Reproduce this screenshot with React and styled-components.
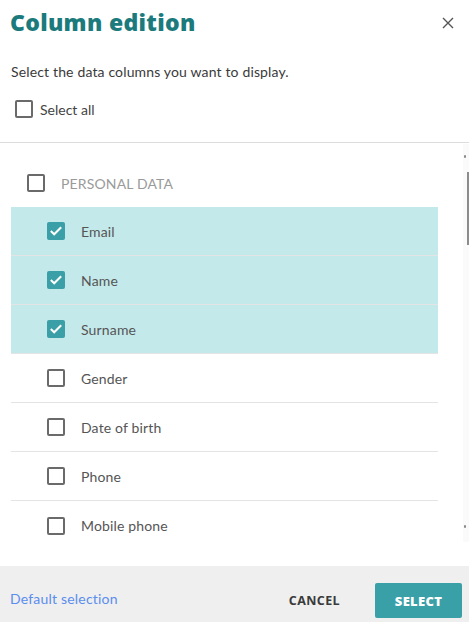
import React, { useState } from "react";
import styled, { createGlobalStyle } from "styled-components";

const Global = createGlobalStyle`
  html, body { margin: 0; padding: 0; background: #fff; overflow: hidden; }
  body { font-family: Lato, "Noto Sans", sans-serif; }
  * { box-sizing: border-box; }
`;

const Dialog = styled.div`
  width: 469px;
  height: 622px;
  display: flex;
  flex-direction: column;
  background: #fff;
`;

const Header = styled.div`
  display: flex;
  align-items: flex-start;
  justify-content: space-between;
  padding: 7px 14px 0 10px;
`;

const Title = styled.h1`
  margin: 0;
  font-family: "Open Sans", sans-serif;
  font-weight: 800;
  font-size: 23px;
  line-height: 30px;
  color: #1b7a7c;
  letter-spacing: 0.3px;
`;

const CloseButton = styled.button`
  border: 0;
  background: none;
  padding: 0;
  margin-top: 9px;
  width: 14px;
  height: 14px;
  display: flex;
  cursor: pointer;
`;

const Intro = styled.div`
  padding: 0 11px;
`;

const Subtitle = styled.p`
  margin: 26px 0 0;
  font-size: 14px;
  line-height: 18px;
  letter-spacing: 0.15px;
  color: #3a3a3a;
`;

const SelectAllRow = styled.label`
  display: flex;
  align-items: center;
  gap: 7px;
  margin: 19px 0 0 4px;
  height: 18px;
  font-size: 14px;
  color: #444;
`;

const Divider = styled.div`
  height: 1px;
  background: #dcdcdc;
  margin-top: 24px;
`;

const ScrollArea = styled.div`
  flex: 0 0 423px;
  display: flex;
  overflow: hidden;
`;

const List = styled.div`
  flex: 1;
  padding: 0 25px 0 11px;
  overflow: hidden;
`;

const Track = styled.div`
  flex: 0 0 6px;
  margin: 1px 0 24px;
  background: #fafafa;
  display: flex;
  flex-direction: column;
  align-items: flex-end;
  padding: 11px 0 14px;
`;

const Arrow = styled.span`
  width: 2px;
  height: 3px;
  margin-right: 3px;
  background: #8a8a8a;
  border-radius: 1px;
`;

const Thumb = styled.span`
  width: 2px;
  height: 73px;
  margin-top: 14px;
  background: #8c8c8c;
`;

const TrackFill = styled.span`
  flex: 1;
`;

const GroupHeader = styled.label`
  display: flex;
  align-items: center;
  gap: 16px;
  height: 64px;
  padding: 16px 0 0 16px;
  font-size: 14px;
  letter-spacing: 0.15px;
  color: #9a9a9a;
  text-transform: uppercase;
`;

const Row = styled.label`
  display: flex;
  align-items: center;
  gap: 16px;
  height: 49px;
  padding-left: 36px;
  border-bottom: 1px solid #e4e4e4;
  background: ${(p) => (p.$checked ? "#c4e9eb" : "#fff")};
  font-size: 14px;
  letter-spacing: 0.15px;
  color: #555;
  &:last-child { border-bottom: 0; }
`;

const Box = styled.span`
  flex: 0 0 18px;
  width: 18px;
  height: 18px;
  border-radius: 2px;
  border: ${(p) => (p.$checked ? "0" : "2px solid #6a6a6a")};
  background: ${(p) => (p.$checked ? "#3a9fa6" : "transparent")};
  display: flex;
  align-items: center;
  justify-content: center;
`;

const Footer = styled.div`
  flex: 1;
  display: flex;
  align-items: flex-start;
  background: #eeefee;
  padding: 17px 7px 0 10px;
`;

const LinkButton = styled.button`
  border: 0;
  background: none;
  padding: 0;
  margin-top: 7px;
  font-family: inherit;
  font-size: 14px;
  letter-spacing: 0.2px;
  color: #5b8def;
  cursor: pointer;
`;

const Spacer = styled.div`
  flex: 1;
`;

const TextButton = styled.button`
  border: 0;
  background: none;
  font-family: "Open Sans", sans-serif;
  font-weight: 700;
  font-size: 12.5px;
  letter-spacing: 0.4px;
  color: #3a3a3a;
  height: 35px;
  padding: 0 35px 0 0;
  cursor: pointer;
`;

const PrimaryButton = styled.button`
  border: 0;
  border-radius: 2px;
  background: #3aa0a8;
  color: #fff;
  font-family: "Open Sans", sans-serif;
  font-weight: 800;
  font-size: 13px;
  letter-spacing: 0.3px;
  width: 87px;
  height: 35px;
  cursor: pointer;
`;

const Check = ({ checked }) => (
  <Box $checked={checked}>
    {checked && (
      <svg width="14" height="12" viewBox="0 0 14 12">
        <path d="M1.8 6 L5.2 9.3 L12.2 2.2" fill="none" stroke="#fff" strokeWidth="2" />
      </svg>
    )}
  </Box>
);

const group = {
  name: "Personal data",
  fields: [
    ["Email", true],
    ["Name", true],
    ["Surname", true],
    ["Gender", false],
    ["Date of birth", false],
    ["Phone", false],
    ["Mobile phone", false],
  ],
};

export default function App() {
  const [all] = useState(false);
  return (
    <>
      <Global />
      <Dialog>
        <Header>
          <Title>Column edition</Title>
          <CloseButton aria-label="Close">
            <svg width="14" height="14" viewBox="0 0 14 14">
              <path d="M2 2 L12 12 M12 2 L2 12" stroke="#555" strokeWidth="1.4" />
            </svg>
          </CloseButton>
        </Header>
        <Intro>
          <Subtitle>Select the data columns you want to display.</Subtitle>
          <SelectAllRow>
            <Check checked={all} />
            Select all
          </SelectAllRow>
        </Intro>
        <Divider />
        <ScrollArea>
          <List>
            <GroupHeader>
              <Check checked={false} />
              {group.name}
            </GroupHeader>
            {group.fields.map(([label, checked]) => (
              <Row key={label} $checked={checked}>
                <Check checked={checked} />
                {label}
              </Row>
            ))}
          </List>
          <Track>
            <Arrow />
            <Thumb />
            <TrackFill />
            <Arrow />
          </Track>
        </ScrollArea>
        <Footer>
          <LinkButton>Default selection</LinkButton>
          <Spacer />
          <TextButton>CANCEL</TextButton>
          <PrimaryButton>SELECT</PrimaryButton>
        </Footer>
      </Dialog>
    </>
  );
}
